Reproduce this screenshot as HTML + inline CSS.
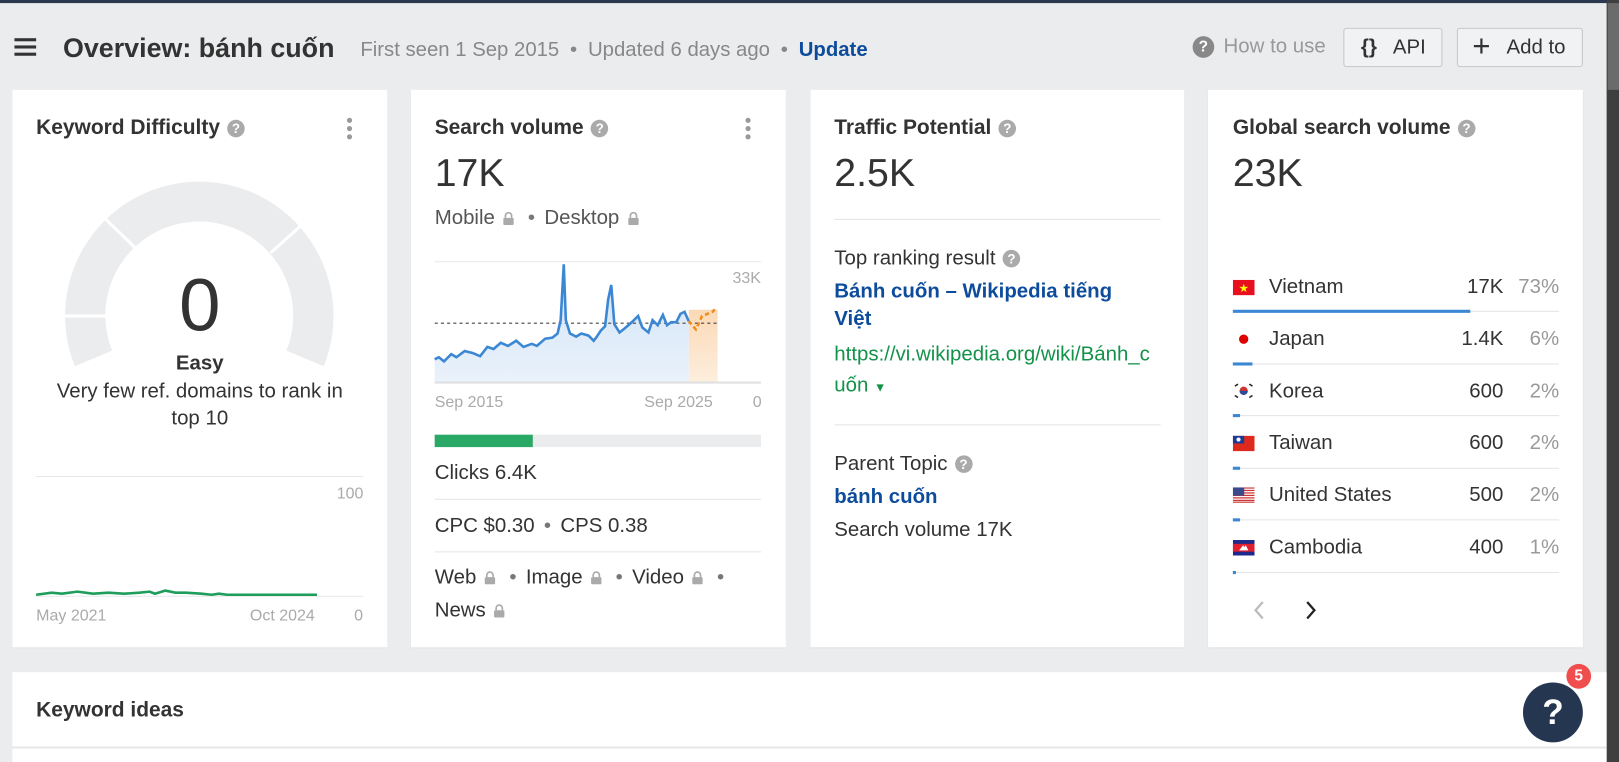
<!DOCTYPE html>
<html><head><meta charset="utf-8">
<style>
html,body{margin:0;padding:0;width:1619px;height:762px;overflow:hidden;background:#ebecee;}
#w{position:absolute;left:0;top:0;width:1568px;height:738px;transform:scale(1.03253);transform-origin:0 0;font-family:"Liberation Sans",Arial,sans-serif;color:#333;}
.a{position:absolute;white-space:nowrap;line-height:20px;}
.card{position:absolute;top:87px;height:540px;background:#fff;box-shadow:0 1px 1px rgba(0,0,0,.08);}
.t{font-size:20.3px;font-weight:bold;color:#333;}
.q{display:inline-block;width:17px;height:17px;border-radius:50%;background:#aaa;color:#fff;font-size:13px;font-weight:bold;text-align:center;line-height:17px;vertical-align:1px;margin-left:7px;}
.big{font-size:38px;line-height:40px;color:#333;}
.f18{font-size:19.8px;}
.hr{position:absolute;height:1px;background:#e3e4e6;}
.lk{display:inline-block;vertical-align:-1px;margin:0 4px 0 8px;}
.dot{color:#777;margin:0 9px;}
.kb{position:absolute;width:5px;}
.kb i{display:block;width:5px;height:5px;border-radius:50%;background:#999;margin-bottom:3px;}
.gr{color:#999;}
.sm{font-size:15.5px;color:#aaa;}
</style></head><body>
<div id="w">
<div style="position:absolute;left:0;top:0;width:1568px;height:3px;background:#2b3950"></div>
<div style="position:absolute;left:1556px;top:0;width:12px;height:738px;background:#3f3f3f"></div>
<div style="position:absolute;left:1557px;top:3px;width:11px;height:84px;background:#6b6b6b"></div>

<!-- header -->
<div style="position:absolute;left:14px;top:37px;width:21px;height:3px;background:#333"></div>
<div style="position:absolute;left:14px;top:44px;width:21px;height:3px;background:#333"></div>
<div style="position:absolute;left:14px;top:51px;width:21px;height:3px;background:#333"></div>
<div class="a" style="left:61px;top:31px;font-size:26px;line-height:30px;font-weight:bold;color:#333">Overview: bánh cuốn</div>
<div class="a" style="left:349px;top:38px;font-size:19.7px;color:#888">First seen 1 Sep 2015 <span style="margin:0 5px">•</span> Updated 6 days ago <span style="margin:0 5px">•</span> <b style="color:#0d4c9c">Update</b></div>
<div style="position:absolute;left:1155px;top:35px;width:21px;height:21px;border-radius:50%;background:#888;color:#fff;font-weight:bold;font-size:15px;text-align:center;line-height:21px">?</div>
<div class="a" style="left:1185px;top:35px;font-size:19.8px;color:#999">How to use</div>
<div style="position:absolute;left:1301px;top:27px;width:94px;height:36px;border:1px solid #c6c7c9;border-radius:3px;background:#f1f2f3;font-size:19.8px;line-height:36px;color:#333"><b style="position:absolute;left:16px;font-size:20px">{}</b><span style="position:absolute;left:47px">API</span></div>
<div style="position:absolute;left:1411px;top:27px;width:120px;height:36px;border:1px solid #c6c7c9;border-radius:3px;background:#f1f2f3;font-size:19.8px;line-height:36px;color:#333"><span style="position:absolute;left:14px;top:0;font-size:30px;line-height:34px">+</span><span style="position:absolute;left:47px">Add to</span></div>

<!-- card 1 -->
<div class="card" style="left:12px;width:363px"></div>
<div class="a t" style="left:35px;top:114px">Keyword Difficulty<span class="q">?</span></div>
<div class="kb" style="left:336px;top:114px"><i></i><i></i><i></i></div>
<svg style="position:absolute;left:12px;top:87px" width="363" height="540">
<g transform="translate(-12,-87)">
<path d="M 72.5 354.7 A 130 130 0 1 1 313.5 354.7 L 277.4 339.6 A 91 91 0 1 0 108.6 339.6 Z" fill="#ebecee"/>
<line x1="60" y1="306" x2="104" y2="306" stroke="#fff" stroke-width="3"/>
<line x1="100" y1="210" x2="132" y2="241" stroke="#fff" stroke-width="3"/>
<line x1="292" y1="218" x2="262" y2="245" stroke="#fff" stroke-width="3"/>
<line x1="35" y1="461.5" x2="352" y2="461.5" stroke="#e6e7e9"/>
<line x1="35" y1="577.5" x2="352" y2="577.5" stroke="#e6e7e9"/>
<polyline fill="none" stroke="#1e9e5a" stroke-width="2.5" points="35,576 50,574 60,575 75,573 90,575 105,574 120,575 135,574 145,573 150,575 160,572 170,574 180,574 195,575 205,576 212,575 220,576 235,576 250,576 275,576 307,576"/>
</g></svg>
<div class="a" style="left:12px;width:363px;text-align:center;top:258px;font-size:72px;line-height:76px;color:#333">0</div>
<div class="a" style="left:12px;width:363px;text-align:center;top:342px;font-size:19.8px;font-weight:bold">Easy</div>
<div class="a" style="left:12px;width:363px;text-align:center;top:369px;font-size:19.8px">Very few ref. domains to rank in</div>
<div class="a" style="left:12px;width:363px;text-align:center;top:395px;font-size:19.8px">top 10</div>
<div class="a sm" style="left:300px;width:52px;text-align:right;top:469px">100</div>
<div class="a sm" style="left:35px;top:587px">May 2021</div>
<div class="a sm" style="left:242px;top:587px">Oct 2024</div>
<div class="a sm" style="left:343px;top:587px">0</div>

<!-- card 2 -->
<div class="card" style="left:398px;width:363px"></div>
<div class="a t" style="left:421px;top:114px">Search volume<span class="q">?</span></div>
<div class="kb" style="left:722px;top:114px"><i></i><i></i><i></i></div>
<div class="a big" style="left:421px;top:148px">17K</div>
<div class="a f18" style="left:421px;top:201px;color:#555">Mobile<svg class="lk" width="11" height="13" viewBox="0 0 11 13"><path d="M2.5 6V4a3 3 0 0 1 6 0v2" fill="none" stroke="#aaa" stroke-width="1.6"/><rect x="0.5" y="6" width="10" height="7" rx="1" fill="#aaa"/></svg><span class="dot">•</span>Desktop<svg class="lk" width="11" height="13" viewBox="0 0 11 13"><path d="M2.5 6V4a3 3 0 0 1 6 0v2" fill="none" stroke="#aaa" stroke-width="1.6"/><rect x="0.5" y="6" width="10" height="7" rx="1" fill="#aaa"/></svg></div>
<svg style="position:absolute;left:0;top:0" width="1568" height="738">
<defs><linearGradient id="bg" x1="0" y1="0" x2="0" y2="1"><stop offset="0" stop-color="#cfe2f6"/><stop offset="1" stop-color="#eaf2fb"/></linearGradient>
<linearGradient id="og" x1="0" y1="0" x2="0" y2="1"><stop offset="0" stop-color="#fbd9b6"/><stop offset="1" stop-color="#fdeedd"/></linearGradient></defs>
<line x1="421" y1="253.5" x2="737" y2="253.5" stroke="#e6e7e9"/>
<rect x="667" y="300" width="28" height="70" fill="url(#og)"/>
<polygon fill="url(#bg)" points="421,348 425,346 430,350 437,343 442,346 450,340 458,342 465,345 472,336 478,338 485,332 492,335 500,330 507,336 515,333 520,335 528,328 535,327 540,323 543,310 546,256 548,310 552,323 558,326 563,323 570,325 575,330 578,326 582,320 586,316 589,290 592,276 595,314 600,322 605,318 612,312 618,306 622,317 628,322 632,310 637,315 642,305 646,315 650,312 655,312 659,304 663,304 667,311 667,370 421,370"/>
<line x1="421" y1="313" x2="695" y2="313" stroke="#444" stroke-dasharray="3,3"/>
<polyline fill="none" stroke="#3b87d4" stroke-width="2.5" points="421,348 425,346 430,350 437,343 442,346 450,340 458,342 465,345 472,336 478,338 485,332 492,335 500,330 507,336 515,333 520,335 528,328 535,327 540,323 543,310 546,256 548,310 552,323 558,326 563,323 570,325 575,330 578,326 582,320 586,316 589,290 592,276 595,314 600,322 605,318 612,312 618,306 622,317 628,322 632,310 637,315 642,305 646,315 650,312 655,312 659,304 663,302 667,311"/>
<polyline fill="none" stroke="#f08c1e" stroke-width="2.5" stroke-dasharray="4,3" points="667,311 674,319 680,306 685,304 690,302 694,298"/>
<line x1="421" y1="370.5" x2="737" y2="370.5" stroke="#e0e1e3" stroke-width="2"/>
</svg>
<div class="a sm" style="left:690px;width:47px;text-align:right;top:260px">33K</div>
<div class="a sm" style="left:421px;top:380px">Sep 2015</div>
<div class="a sm" style="left:624px;top:380px">Sep 2025</div>
<div class="a sm" style="left:729px;top:380px">0</div>
<div style="position:absolute;left:421px;top:421px;width:316px;height:12px;background:#ebecee"></div>
<div style="position:absolute;left:421px;top:421px;width:95px;height:12px;background:#2aa865"></div>
<div class="a f18" style="left:421px;top:448px">Clicks 6.4K</div>
<div class="hr" style="left:421px;top:483px;width:316px"></div>
<div class="a f18" style="left:421px;top:499px">CPC $0.30<span class="dot">•</span>CPS 0.38</div>
<div class="hr" style="left:421px;top:534px;width:316px"></div>
<div class="a f18" style="left:421px;top:549px">Web<svg class="lk" width="11" height="13" viewBox="0 0 11 13"><path d="M2.5 6V4a3 3 0 0 1 6 0v2" fill="none" stroke="#aaa" stroke-width="1.6"/><rect x="0.5" y="6" width="10" height="7" rx="1" fill="#aaa"/></svg><span class="dot">•</span>Image<svg class="lk" width="11" height="13" viewBox="0 0 11 13"><path d="M2.5 6V4a3 3 0 0 1 6 0v2" fill="none" stroke="#aaa" stroke-width="1.6"/><rect x="0.5" y="6" width="10" height="7" rx="1" fill="#aaa"/></svg><span class="dot">•</span>Video<svg class="lk" width="11" height="13" viewBox="0 0 11 13"><path d="M2.5 6V4a3 3 0 0 1 6 0v2" fill="none" stroke="#aaa" stroke-width="1.6"/><rect x="0.5" y="6" width="10" height="7" rx="1" fill="#aaa"/></svg><span class="dot">•</span></div>
<div class="a f18" style="left:421px;top:581px">News<svg class="lk" width="11" height="13" viewBox="0 0 11 13"><path d="M2.5 6V4a3 3 0 0 1 6 0v2" fill="none" stroke="#aaa" stroke-width="1.6"/><rect x="0.5" y="6" width="10" height="7" rx="1" fill="#aaa"/></svg></div>

<!-- card 3 -->
<div class="card" style="left:785px;width:362px"></div>
<div class="a t" style="left:808px;top:114px">Traffic Potential<span class="q">?</span></div>
<div class="a big" style="left:808px;top:148px">2.5K</div>
<div class="hr" style="left:808px;top:212px;width:316px"></div>
<div class="a f18" style="left:808px;top:240px">Top ranking result<span class="q">?</span></div>
<div class="a f18" style="left:808px;top:272px;font-weight:bold;color:#0d4c9c">Bánh cuốn – Wikipedia tiếng</div>
<div class="a f18" style="left:808px;top:299px;font-weight:bold;color:#0d4c9c">Việt</div>
<div class="a f18" style="left:808px;top:333px;color:#13924a">https://vi.wikipedia.org/wiki/Bánh_c</div>
<div class="a f18" style="left:808px;top:363px;color:#13924a">uốn <span style="font-size:12px">▼</span></div>
<div class="hr" style="left:808px;top:411px;width:316px"></div>
<div class="a f18" style="left:808px;top:439px">Parent Topic<span class="q">?</span></div>
<div class="a f18" style="left:808px;top:471px;font-weight:bold;color:#0d4c9c">bánh cuốn</div>
<div class="a f18" style="left:808px;top:503px">Search volume 17K</div>

<!-- card 4 -->
<div class="card" style="left:1170px;width:363px"></div>
<div class="a t" style="left:1194px;top:114px">Global search volume<span class="q">?</span></div>
<div class="a big" style="left:1194px;top:148px">23K</div>
<div style="position:absolute;left:1194px;top:258px;width:316px;height:310px;font-size:19.8px">
 <div class="hr" style="left:0;top:43px;width:316px"></div>
 <div class="hr" style="left:0;top:94px;width:316px"></div>
 <div class="hr" style="left:0;top:144px;width:316px"></div>
 <div class="hr" style="left:0;top:195px;width:316px"></div>
 <div class="hr" style="left:0;top:245px;width:316px"></div>
 <div class="hr" style="left:0;top:296px;width:316px"></div>
 <div style="position:absolute;left:0;top:42px;width:230px;height:3px;background:#3b87d4"></div>
 <div style="position:absolute;left:0;top:93px;width:19px;height:3px;background:#3b87d4"></div>
 <div style="position:absolute;left:0;top:143px;width:7px;height:3px;background:#3b87d4"></div>
 <div style="position:absolute;left:0;top:194px;width:7px;height:3px;background:#3b87d4"></div>
 <div style="position:absolute;left:0;top:244px;width:7px;height:3px;background:#3b87d4"></div>
 <div style="position:absolute;left:0;top:295px;width:3px;height:3px;background:#3b87d4"></div>
 <svg style="position:absolute;left:0;top:13px" width="21" height="15"><rect width="21" height="15" fill="#e8101e"/><text x="10.5" y="12" font-size="11" fill="#ff0" text-anchor="middle">★</text></svg>
 <svg style="position:absolute;left:0;top:63px" width="21" height="15"><rect width="21" height="15" fill="#fff"/><circle cx="10.5" cy="7.5" r="4.5" fill="#d00"/></svg>
 <svg style="position:absolute;left:0;top:113px" width="21" height="15"><rect width="21" height="15" fill="#fff"/><circle cx="10.5" cy="7.5" r="4" fill="#c33"/><path d="M6.5 7.5a4 4 0 0 0 8 0z" fill="#2a4d9c"/><g stroke="#222" stroke-width="1.5"><line x1="2" y1="3" x2="5" y2="1"/><line x1="16" y1="1" x2="19" y2="3"/><line x1="2" y1="12" x2="5" y2="14"/><line x1="16" y1="14" x2="19" y2="12"/></g></svg>
 <svg style="position:absolute;left:0;top:164px" width="21" height="15"><rect width="21" height="15" fill="#de2a1c"/><rect width="11" height="7.5" fill="#1c3b97"/><circle cx="5.5" cy="3.75" r="2" fill="#fff"/></svg>
 <svg style="position:absolute;left:0;top:214px" width="21" height="15"><rect width="21" height="15" fill="#fff"/><g fill="#c33"><rect y="0" width="21" height="1.2"/><rect y="2.4" width="21" height="1.2"/><rect y="4.8" width="21" height="1.2"/><rect y="7.2" width="21" height="1.2"/><rect y="9.6" width="21" height="1.2"/><rect y="12" width="21" height="1.2"/><rect y="13.8" width="21" height="1.2"/></g><rect width="11" height="8" fill="#3a4a8c"/></svg>
 <svg style="position:absolute;left:0;top:265px" width="21" height="15"><rect width="21" height="15" fill="#1d2a8c"/><rect y="3.7" width="21" height="7.6" fill="#e0202e"/><path d="M6 10h9l-1.5-3-1-2-1.5 2-1-2-1.5 2z" fill="#fff"/></svg>
 <div class="a" style="left:35px;top:10px">Vietnam</div><div class="a" style="right:54px;top:10px">17K</div><div class="a gr" style="right:0;top:10px">73%</div>
 <div class="a" style="left:35px;top:60px">Japan</div><div class="a" style="right:54px;top:60px">1.4K</div><div class="a gr" style="right:0;top:60px">6%</div>
 <div class="a" style="left:35px;top:111px">Korea</div><div class="a" style="right:54px;top:111px">600</div><div class="a gr" style="right:0;top:111px">2%</div>
 <div class="a" style="left:35px;top:161px">Taiwan</div><div class="a" style="right:54px;top:161px">600</div><div class="a gr" style="right:0;top:161px">2%</div>
 <div class="a" style="left:35px;top:211px">United States</div><div class="a" style="right:54px;top:211px">500</div><div class="a gr" style="right:0;top:211px">2%</div>
 <div class="a" style="left:35px;top:262px">Cambodia</div><div class="a" style="right:54px;top:262px">400</div><div class="a gr" style="right:0;top:262px">1%</div>
</div>
<svg style="position:absolute;left:1210px;top:581px" width="70" height="20"><polyline points="13,2 6,10 13,18" fill="none" stroke="#bbb" stroke-width="2.2"/><polyline points="56,2 63,10 56,18" fill="none" stroke="#222" stroke-width="2.2"/></svg>

<!-- keyword ideas -->
<div style="position:absolute;left:12px;top:651px;width:1544px;height:72px;background:#fff"></div>
<div style="position:absolute;left:12px;top:723px;width:1544px;height:2px;background:#e6e7e9"></div>
<div style="position:absolute;left:12px;top:725px;width:1544px;height:13px;background:#fff"></div>
<div class="a t" style="left:35px;top:678px">Keyword ideas</div>

<div style="position:absolute;left:1475px;top:661px;width:58px;height:58px;border-radius:50%;background:#253750;color:#fff;font-size:34px;font-weight:bold;text-align:center;line-height:58px">?</div>
<div style="position:absolute;left:1517px;top:643px;width:24px;height:24px;border-radius:50%;background:#f04e4e;color:#fff;font-size:15px;font-weight:bold;text-align:center;line-height:24px">5</div>
</div>
</body></html>
